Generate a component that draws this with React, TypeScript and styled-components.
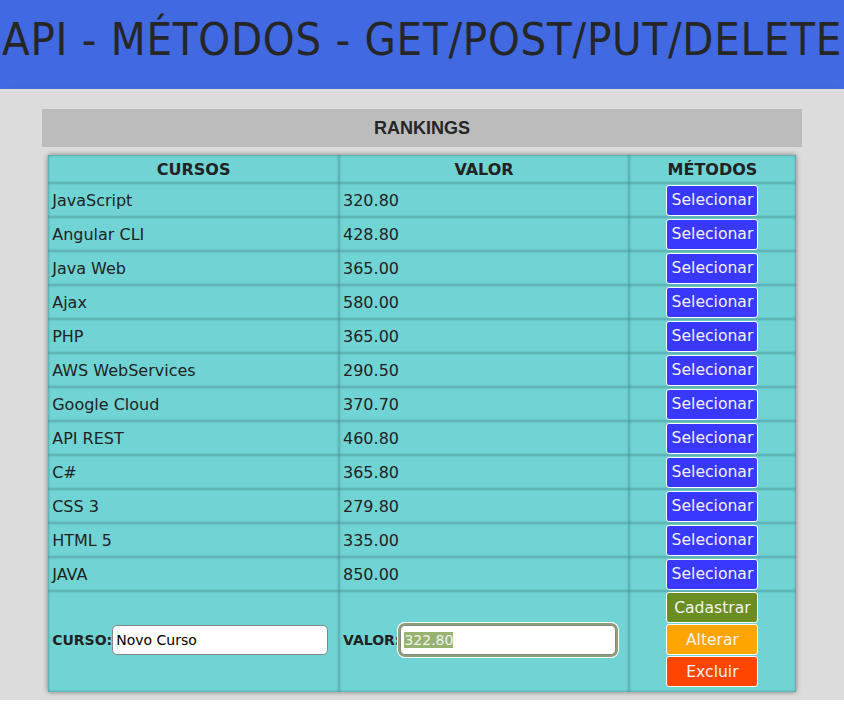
import { useEffect, useRef } from "react";
import styled, { createGlobalStyle } from "styled-components";

const GlobalStyle = createGlobalStyle`
  body {
    margin: 0;
    background: #fff;
    font-family: "DejaVu Sans", Verdana, sans-serif;
  }
  ::selection {
    background: #97b36f;
    color: #f2f2f2;
  }
`;

const Header = styled.header`
  height: 89px;
  background: #4169e1;
  display: flex;
  justify-content: center;
  padding-top: 15px;
  box-sizing: border-box;
  h1 {
    margin: 0;
    font-family: "DejaVu Sans Condensed", "DejaVu Sans", sans-serif;
    font-stretch: condensed;
    font-weight: normal;
    font-size: 45px;
    letter-spacing: 0.75px;
    line-height: 50px;
    color: #262626;
    white-space: nowrap;
  }
`;

const Main = styled.main`
  background: #dcdcdc;
  padding: 20px 5% 8px;
  box-shadow: 0 6px 14px rgba(0, 0, 0, 0.06);
`;

const Banner = styled.h2`
  margin: 0 0 8px;
  height: 38px;
  line-height: 38px;
  background: #bcbcbc;
  text-align: center;
  font-family: "Liberation Sans", Arial, sans-serif;
  font-size: 18px;
  font-weight: bold;
  color: #262626;
`;

const Table = styled.table`
  width: calc(100% - 12px);
  margin: 0 auto;
  border-collapse: collapse;
  box-shadow: 0 0 5px rgba(0, 0, 0, 0.45);
  font-size: 16px;
  color: #222;
`;

const Th = styled.th`
  background: #70d4d4;
  height: 28px;
  padding: 0;
  font-weight: bold;
  box-shadow: inset 0 0 3px rgba(0, 0, 0, 0.4);
`;

const Td = styled.td<{ $center?: boolean; $tall?: boolean }>`
  background: #70d4d4;
  height: ${(p) => (p.$tall ? "96px" : "34px")};
  padding: 0 4px ${(p) => (p.$tall ? "4px" : "0")};
  text-align: ${(p) => (p.$center ? "center" : "left")};
  box-shadow: inset 0 0 3px rgba(0, 0, 0, 0.4);
`;

const Btn = styled.button<{ $bg: string }>`
  display: block;
  margin: 1px auto;
  width: 92px;
  height: 31px;
  padding: 0;
  border: 1px solid #fff;
  border-radius: 3px;
  background: ${(p) => p.$bg};
  color: #f2f2f2;
  font-family: "DejaVu Sans", Verdana, sans-serif;
  font-size: 15.6px;
`;

const Field = styled.label`
  display: flex;
  align-items: center;
  font-size: 14px;
  font-weight: bold;
`;

const Input = styled.input`
  width: 216px;
  height: 30px;
  box-sizing: border-box;
  border: 1px solid #888;
  border-radius: 5px;
  padding: 0 3px;
  background: #fff;
  color: #000;
  font-family: "DejaVu Sans", Verdana, sans-serif;
  font-size: 14px;
  &:focus {
    outline: none;
    box-shadow: 0 0 0 2px #8fa070, 0 0 0 3px #fff;
  }
`;

const cursos: [string, string][] = [
  ["JavaScript", "320.80"],
  ["Angular CLI", "428.80"],
  ["Java Web", "365.00"],
  ["Ajax", "580.00"],
  ["PHP", "365.00"],
  ["AWS WebServices", "290.50"],
  ["Google Cloud", "370.70"],
  ["API REST", "460.80"],
  ["C#", "365.80"],
  ["CSS 3", "279.80"],
  ["HTML 5", "335.00"],
  ["JAVA", "850.00"],
];

export default function App() {
  const valorRef = useRef<HTMLInputElement>(null);

  useEffect(() => {
    valorRef.current?.focus();
    valorRef.current?.select();
  }, []);

  return (
    <>
      <GlobalStyle />
      <Header>
        <h1>API - MÉTODOS - GET/POST/PUT/DELETE</h1>
      </Header>
      <Main>
        <Banner>RANKINGS</Banner>
        <Table>
          <colgroup>
            <col style={{ width: "38.9%" }} />
            <col style={{ width: "38.8%" }} />
            <col style={{ width: "22.3%" }} />
          </colgroup>
          <thead>
            <tr>
              <Th>CURSOS</Th>
              <Th>VALOR</Th>
              <Th>MÉTODOS</Th>
            </tr>
          </thead>
          <tbody>
            {cursos.map(([nome, valor]) => (
              <tr key={nome}>
                <Td>{nome}</Td>
                <Td>{valor}</Td>
                <Td $center>
                  <Btn $bg="#3838ff">Selecionar</Btn>
                </Td>
              </tr>
            ))}
            <tr>
              <Td $tall>
                <Field>
                  CURSO:
                  <Input defaultValue="Novo Curso" />
                </Field>
              </Td>
              <Td $tall>
                <Field>
                  VALOR:
                  <Input ref={valorRef} defaultValue="322.80" />
                </Field>
              </Td>
              <Td $center $tall>
                <Btn $bg="#6b8e23">Cadastrar</Btn>
                <Btn $bg="#ffa500">Alterar</Btn>
                <Btn $bg="#ff4500">Excluir</Btn>
              </Td>
            </tr>
          </tbody>
        </Table>
      </Main>
    </>
  );
}
